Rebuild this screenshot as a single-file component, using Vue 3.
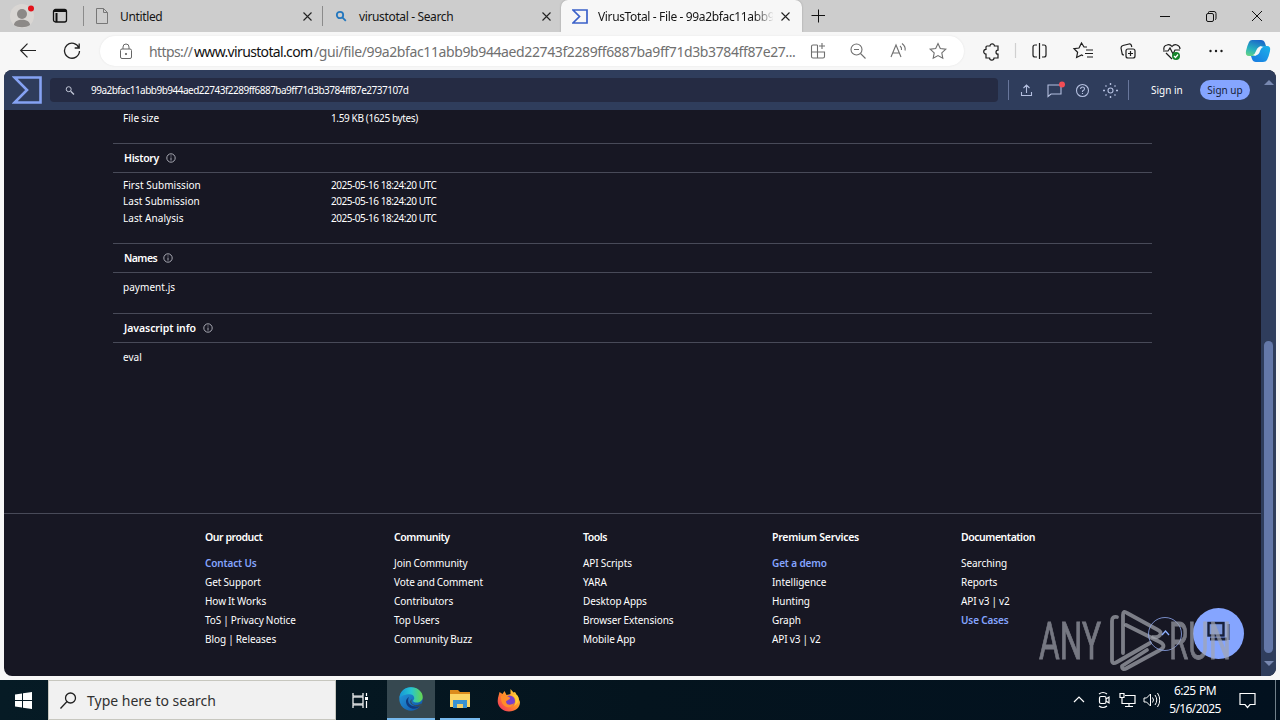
<template>
  <div class="desktop">
    <div class="tab-strip">
      <div class="profile">
        <svg width="28" height="30" viewBox="0 0 28 30">
          <circle cx="14" cy="15" r="12" fill="#d9d6d3" />
          <circle cx="14" cy="13" r="5" fill="#8c8987" />
          <path d="M6 24c0-7 16-7 16 0-4 3-12 3-16 0z" fill="#8c8987" />
          <circle cx="23" cy="7.500" r="3" fill="#e3121b" />
        </svg>
      </div>
      <svg class="workspaces" width="16" height="16" viewBox="0 0 16 16" fill="none" stroke="#111">
        <rect x="1.500" y="1.500" width="13" height="12.500" rx="2" stroke-width="1.300" />
        <path d="M2 3h12M4.500 5v9" stroke-width="2" />
      </svg>

      <div class="tab first">
        <svg width="14" height="16" viewBox="0 0 14 16" fill="none" stroke="#777">
          <path d="M1.500.5h7l4 4v11h-11zM8.500.5v4h4" />
        </svg>
        <span class="tab-title untitled">Untitled</span>
        <svg class="close" width="9" height="9" viewBox="0 0 9 9"><path d="M.5.5l8 8M8.500.5l-8 8" /></svg>
      </div>
      <div class="tab second">
        <svg width="14" height="14" viewBox="0 0 14 14" fill="none" stroke="#2477be" stroke-width="1.800">
          <circle cx="6" cy="6" r="3.200" />
          <path d="M8.300 8.300l3.500 3.500" />
        </svg>
        <span class="tab-title search-tab">virustotal - Search</span>
        <svg class="close" width="9" height="9" viewBox="0 0 9 9"><path d="M.5.5l8 8M8.500.5l-8 8" /></svg>
      </div>
      <div class="tab active">
        <svg width="16" height="15" viewBox="0 0 16 15" fill="none" stroke="#3b61c9" stroke-width="1.700">
          <path d="M1 1h14v13H1l6.500-6.500z" />
        </svg>
        <span class="tab-title fade">VirusTotal - File - 99a2bfac11abb9</span>
        <svg class="close" width="9" height="9" viewBox="0 0 9 9"><path d="M.5.5l8 8M8.500.5l-8 8" /></svg>
      </div>
      <svg class="new-tab" width="14" height="14" viewBox="0 0 14 14" stroke="#111"><path d="M7.500 .5v13M.5 6.500h14" /></svg>

      <svg class="window-controls" width="102" height="14" viewBox="0 0 102 14" fill="none" stroke="#111">
        <path d="M0 7.500h10" />
        <rect x="46.500" y="4.500" width="7" height="8" rx="1.500" />
        <path d="M48.500 4V3.500q0-1 1-1h4.500q2 0 2 2v5q0 1-1 1" />
        <path d="M92 2l10 10M102 2L92 12" />
      </svg>
    </div>

    <div class="toolbar">
      <svg class="back" width="18" height="16" viewBox="0 0 18 16" fill="none" stroke="#222" stroke-width="1.200">
        <path d="M17 7.500H2M8.500 .7L1.700 7.500l6.800 6.800" />
      </svg>
      <svg class="reload" width="18" height="18" viewBox="0 0 18 18" fill="none" stroke="#222" stroke-width="1.300">
        <path d="M16 6A7.500 7.500 0 1 0 16.500 9M16.200 1.500V6h-4.500" />
      </svg>
      <div class="address">
        <svg class="lock" width="14" height="17" viewBox="0 0 14 17" fill="none" stroke="#666">
          <rect x="1.500" y="6" width="11" height="9.500" rx="1.500" />
          <path d="M4 6V4a3 3 0 0 1 6 0v2" />
          <circle cx="7" cy="11" r=".7" fill="#666" />
        </svg>
        <span class="url url-scheme">https://</span>
        <span class="url url-host">www.virustotal.com</span>
        <span class="url url-path">/gui/file/99a2bfac11abb9b944aed22743f2289ff6887ba9ff71d3b3784ff87e27...</span>
        <svg class="address-icons" width="138" height="18" viewBox="0 0 138 18" fill="none" stroke="#6f6f6f" stroke-width="1.100">
          <path d="M8.500 3H4Q2.500 3 2.500 4.500v10Q2.500 16 4 16h10q1.500 0 1.500-1.500V10H2.500M8.500 3v13M13 1v6M10 4h6" />
          <circle cx="47.500" cy="7.500" r="5.500" />
          <path d="M45 7.500h5M51.500 11.500l5 5" />
          <path d="M82 15l5-12 5 12M84 11h6.500M91 4q2 1.500 1.500 4M93 1.500q4 3 3 7" />
          <path d="M129 1.500l2.300 5 5.500.7-4 3.700 1 5.300-4.800-2.600-4.800 2.600 1-5.300-4-3.700 5.500-.7z" />
        </svg>
      </div>
      <svg class="browser-icons" width="296" height="28" viewBox="0 0 296 28" fill="none" stroke="#1c1c1c" stroke-width="1.200">
        <path transform="translate(1 0)" d="M7 9h3a2.200 2.200 0 1 1 4.400 0H18v4.200a2 2 0 1 0 0 4V21h-4a2.200 2.200 0 0 1-4.400 0H6v-4a2.300 2.300 0 1 1 0-4.600V10q0-1 1-1z" />
        <path d="M36.500 6v15" stroke="#d0d0d0" />
        <path transform="translate(1 0)" d="M57 8h-2q-2 0-2 2v8q0 2 2 2h2M62 8h2q2 0 2 2v8q0 2-2 2h-2M59.500 6v16" />
        <path transform="translate(1 0)" d="M107 10h-3l-2.500-4-2.500 5-5 .7 3.600 3.600-1 5.200 5-2.500 1.500.8M106 13h7M105 16.500h8M107 20h6" />
        <g transform="translate(3 0)">
          <rect x="144" y="12" width="9" height="9" rx="2" />
          <path d="M148.500 14v5M146 16.500h5M142 18q-2 0-2-2l-1-5q0-2 2-2.500l6-1.500q2-.5 2.500 2l.3 1" />
        </g>
        <g transform="translate(3 0)">
          <path d="M182 13q-1-4 3-5 3-1 5 1.500 2-2.500 5-1.500 3 1 3 4M181 14h5l2-3 3 6 2-4h5M184 16l6 6" />
          <circle cx="194" cy="19" r="4" fill="#15832b" stroke="none" />
          <path d="M192 19l1.500 1.500 2.500-3" stroke="#fff" />
        </g>
        <g fill="#1c1c1c" stroke="none"><circle cx="231.500" cy="14" r="1.200" /><circle cx="237" cy="14" r="1.200" /><circle cx="242.500" cy="14" r="1.200" /></g>
        <g stroke="none">
          <path d="M273 3h9q3 0 4 3l1 3h-5q-2 0-3 3l-2 5q-1 2-4 2h-3q-4 0-3-5 1-5 3-9 1-2 3-2z" fill="url(#copilotLeft)" />
          <path d="M285 9h3q4 0 3 5-1 5-3 9-1 2-4 2h-7q-3 0-4-3l-1-3h4q2 0 3-3l2-5q1-2 4-2z" fill="url(#copilotRight)" />
          <path d="M280 10h4q-2 1-3 4-1 4-4 4h-3q2-1 3-4 1-3 3-4z" fill="#f7f7f7" />
        </g>
        <defs>
          <linearGradient id="copilotLeft" x1=".6" y1="0" x2=".2" y2="1"><stop stop-color="#1b68c9" /><stop offset=".6" stop-color="#27b2bf" /><stop offset="1" stop-color="#64d286" /></linearGradient>
          <linearGradient id="copilotRight" x1="1" y1="0" x2="0" y2="1"><stop stop-color="#1cb3ea" /><stop offset="1" stop-color="#1877e0" /></linearGradient>
        </defs>
      </svg>
    </div>

    <div class="page">
      <header class="vt-header">
        <svg class="vt-logo" width="30" height="28" viewBox="0 0 30 28" fill="none" stroke="#85a2f3" stroke-width="2.600">
          <path d="M2.500 1.500h26v25h-26L15 14z" />
        </svg>
        <div class="vt-search">
          <svg width="10" height="10" viewBox="0 0 10 10" fill="none" stroke="#c3c8d8"><circle cx="3.700" cy="4.200" r="2.500" /><path d="M5.700 6.200L9 9.500" stroke-width="1.300" /></svg>
          <span class="hash">99a2bfac11abb9b944aed22743f2289ff6887ba9ff71d3b3784ff87e2737107d</span>
        </div>
        <i class="divider"></i>
        <svg class="vt-icons" width="100" height="18" viewBox="0 0 100 18" fill="none" stroke="#b4bfdf" stroke-width="1.100">
          <path d="M6.500 12V4M3.500 7l3-3 3 3M1.500 11v3.500h10V11" />
          <path d="M28 4h13v9H31l-3 2.500z" />
          <circle cx="42" cy="3.500" r="3" fill="#f24d55" stroke="none" />
          <circle cx="62.500" cy="9.500" r="6" />
          <path d="M60.500 8q.2-2 2-2 2 0 2 1.700 0 1.300-2 2.300v1M62.500 12v1" />
          <circle cx="90.500" cy="9.500" r="2.500" />
          <path d="M90.500 2v2M90.500 15v2M83 9.500h2M96 9.500h2M85.500 4.500l1 1M94.500 13.500l1 1M85.500 14.500l1-1M94.500 5.500l1-1" stroke-width="1.400" />
        </svg>
        <i class="divider second"></i>
        <span class="sign-in">Sign in</span>
        <span class="sign-up">Sign up</span>
      </header>

      <div class="page-body">
        <main class="content">
          <div class="details">
            <div class="detail size-row"><span>File size</span><span class="value">1.59 KB (1625 bytes)</span></div>
            <section v-for="section in sections" :key="section.title" :class="section.kind">
              <h2>
                <span>{{ section.title }}</span>
                <svg width="10" height="10" viewBox="0 0 10 10" fill="none" stroke="#b7b8c2" stroke-width=".9">
                  <circle cx="5" cy="5" r="4.200" /><path d="M5 4.500v3M5 2.500v1" />
                </svg>
              </h2>
              <div class="rows">
                <div v-for="row in section.rows" :key="row[0]" class="detail">
                  <span>{{ row[0] }}</span><span v-if="row[1]" class="value date">{{ row[1] }}</span>
                </div>
              </div>
            </section>
          </div>

          <footer>
            <div v-for="column in footerColumns" :key="column.title" class="footer-column">
              <h3>{{ column.title }}</h3>
              <a v-for="link in column.links" :key="link" :class="{ highlight: highlighted.includes(link) }">{{ link }}</a>
            </div>
          </footer>
        </main>
        <div class="scrollbar"><div class="thumb"></div></div>
      </div>
      <svg class="scroll-arrow up" width="10" height="6" viewBox="0 0 10 6"><path d="M0 6l5-5 5 5z" /></svg>
      <svg class="scroll-arrow down" width="10" height="6" viewBox="0 0 10 6"><path d="M0 0l5 5 5-5z" /></svg>
    </div>

    <!-- floating buttons and the recorder's mark lie over the page -->
    <svg class="overlay" width="244" height="72" viewBox="0 0 244 72">
      <circle cx="184.500" cy="28.500" r="25.500" fill="#85a5ff" />
      <g fill="none" stroke="#182039">
        <rect x="174.500" y="18" width="15" height="12.500" fill="#7995dc" stroke-width="2.400" />
        <path d="M176 34h17" stroke-width="3" />
        <path d="M194.500 19v16" stroke="#4d5c89" stroke-width="2.500" />
      </g>
      <g fill="none" stroke="#a3a6af" stroke-opacity=".72" stroke-width="3.800" stroke-linejoin="round" stroke-linecap="round">
        <path d="M83 12q-5-1-5 4v39q0 5 5 2l33-19" />
        <path d="M89 48V10q0-5 4-2l31 17q4 2 2 5t-7 2" />
        <path d="M92 20l34 17q7 4 0 8L93 63q-5 3-5-2l25-16" />
      </g>
      <circle cx="131" cy="29" r="16.500" fill="none" stroke="#8ea7ee" stroke-width=".8" />
      <path d="M128 30l3.500-4 3.500 4" fill="none" stroke="#8eb0ff" stroke-width="1.300" />
      <g class="mark-text">
        <text x="5" y="54" textLength="62" lengthAdjust="spacingAndGlyphs">ANY</text>
        <text x="135" y="54" textLength="62" lengthAdjust="spacingAndGlyphs">RUN</text>
      </g>
    </svg>

    <div class="taskbar">
      <div class="start">
        <svg width="17" height="17" viewBox="0 0 17 17" fill="#fff"><path d="M0 2.500l7-1V8H0zM8 1.300L17 0v8H8zM0 9h7v6.500l-7-1zM8 9h9v8l-9-1.300z" /></svg>
      </div>
      <div class="task-search">
        <svg width="17" height="17" viewBox="0 0 17 17" fill="none" stroke="#202020" stroke-width="1.300"><circle cx="10.500" cy="6" r="5" /><path d="M7 9.500l-6.500 7" /></svg>
        <span>Type here to search</span>
      </div>
      <div class="task-view">
        <svg width="17" height="17" viewBox="0 0 17 17" fill="none" stroke="#fff" stroke-width="1.200"><path d="M1 1v3h10V1M1 16v-3h10v3M14.500 1v3M14.500 9v7" /><rect x="1" y="5" width="10" height="7" /><path d="M13 6.500h3" stroke-width="3" /></svg>
      </div>
      <div class="task-app edge">
        <svg width="24" height="24" viewBox="0 0 24 24">
          <defs>
            <linearGradient id="edgeTop" x1="0" y1="0" x2="1" y2="0"><stop stop-color="#1696d7" /><stop offset=".5" stop-color="#27c5d0" /><stop offset="1" stop-color="#67d64c" /></linearGradient>
            <linearGradient id="edgeBase" x1="0" y1="0" x2="1" y2="1"><stop stop-color="#249fe0" /><stop offset="1" stop-color="#1150a6" /></linearGradient>
          </defs>
          <circle cx="12" cy="12" r="11.700" fill="url(#edgeBase)" />
          <path d="M.5 11C1 4 6 .3 12 .3c7 0 12 5 11.700 10 0 4-4 6-8 5-2-.5-2-2-.7-3 1-2-1-5-4-5C6 7.300 2 9 .5 11z" fill="url(#edgeTop)" />
          <path d="M10 10c-3 6 2 11 11 9-4 5-13 3-14-4-.3-2 1-4 3-5z" fill="#103b80" />
          <path d="M13.500 12c-3 3 0 7 5 6l4-1.500 1.500 2-4 1c-7 0-12-5-6.500-7.500z" fill="#394c54" />
        </svg>
      </div>
      <div class="task-app explorer">
        <svg width="22" height="20" viewBox="0 0 22 20"><path d="M1 1h8l2 2h10v6H1z" fill="#dc8c1d" /><path d="M1 5h20v13H1z" fill="#fcd565" /><path d="M4 11h14v8h-4v-4H8v4H4z" fill="#3992d1" /><path d="M8 15h6v4H8z" fill="#efce6b" /></svg>
      </div>
      <div class="task-app firefox">
        <svg width="24" height="24" viewBox="0 0 24 24">
          <defs><linearGradient id="foxFire" x1="1" y1="0" x2="0" y2="1"><stop stop-color="#ffe940" /><stop offset=".5" stop-color="#ff8929" /><stop offset="1" stop-color="#f02668" /></linearGradient></defs>
          <path d="M2.500 4l3 2 2-3 2 4 4-1V1l3 3.500L18 4l3 5 2 5c0 6-5 9.500-11 9.500S.5 19 .7 13C.8 9 2 7 2.500 4z" fill="url(#foxFire)" />
          <circle cx="12.500" cy="13" r="5.500" fill="#7840cb" />
          <path d="M4 8c4-2 7 0 9 2 0 2-4 2-4 4 1 4 6 3 8 1-1 7-14 6-13-7z" fill="#ff8c2a" />
          <path d="M15 7c4 2 5 7 2 11 5-3 6-8 3-11z" fill="#ffca36" />
        </svg>
      </div>
      <svg class="tray-icons" width="87" height="18" viewBox="0 0 87 18" fill="none" stroke="#fff" stroke-width="1.200">
        <path d="M1 11l5-5 5 5" />
        <rect x="26.500" y="5.500" width="6.500" height="7" rx="1.500" /><path d="M33 8l3-2v6l-3-2M26 3q4-3 8 0M26 15q4 3 8 0" />
        <path d="M52 4.500h10v8H51M56 12.500v3M52 15.500h8M47 2.500h4v4h-4zM49 6.500v6h3" />
        <path d="M71 7h2.500l4-4v12l-4-4H71zM79.500 6.500q2 2.500 0 5M82 4q3.500 5 0 10M84.500 2q4.500 7 0 14" stroke-width="1" />
      </svg>
      <div class="clock"><span class="time">6:25 PM</span><span>5/16/2025</span></div>
      <svg class="notice" width="17" height="17" viewBox="0 0 17 17" fill="none" stroke="#fff" stroke-width="1.200"><path d="M1 1.500h15v11h-5l-2.500 3-2.500-3H1z" /></svg>
      <i class="show-desktop"></i>
    </div>
  </div>
</template>

<script setup>
const submitted = '2025-05-16 18:24:20 UTC'

const sections = [
  {
    title: 'History',
    kind: 'history',
    rows: [
      ['First Submission', submitted],
      ['Last Submission', submitted],
      ['Last Analysis', submitted]
    ]
  },
  { title: 'Names', kind: 'names', rows: [['payment.js']] },
  { title: 'Javascript info', kind: 'script-info', rows: [['eval']] }
]

const highlighted = ['Contact Us', 'Get a demo', 'Use Cases']

const footerColumns = [
  { title: 'Our product', links: ['Contact Us', 'Get Support', 'How It Works', 'ToS | Privacy Notice', 'Blog | Releases'] },
  { title: 'Community', links: ['Join Community', 'Vote and Comment', 'Contributors', 'Top Users', 'Community Buzz'] },
  { title: 'Tools', links: ['API Scripts', 'YARA', 'Desktop Apps', 'Browser Extensions', 'Mobile App'] },
  { title: 'Premium Services', links: ['Get a demo', 'Intelligence', 'Hunting', 'Graph', 'API v3 | v2'] },
  { title: 'Documentation', links: ['Searching', 'Reports', 'API v3 | v2', 'Use Cases'] }
]
</script>

<style>
body {
  margin: 0;
  overflow: hidden;
}
</style>

<style scoped>
* {
  box-sizing: border-box;
}

.desktop {
  position: relative;
  width: 1280px;
  height: 720px;
  display: flex;
  flex-direction: column;
  background: #f7f7f7;
  font-family: "Noto Sans", sans-serif;
  white-space: nowrap;
}

svg {
  display: block;
  flex-shrink: 0;
}

.tab-strip {
  height: 32px;
  display: flex;
  align-items: center;
  background: #cdcdcd;
}

.profile {
  margin-left: 8px;
}

.workspaces {
  margin: 0 15px 0 16px;
}

.tab {
  height: 32px;
  display: flex;
  align-items: center;
  font-size: 12px;
  color: #151515;
}

.tab.first,
.tab.second {
  width: 239px;
  padding: 0 10px 0 12px;
  background: linear-gradient(#8b8b8b, #8b8b8b) 0 6px / 1px 20px no-repeat;
}

.tab.active {
  width: 241px;
  padding: 0 12px 0 11px;
  background: #f7f7f7;
  border-radius: 7px 7px 0 0;
  box-shadow: 0 0 2px #999;
  clip-path: inset(0 -3px 0 -3px);
}

.tab-title {
  margin-left: 10px;
}

.untitled {
  margin-left: 11px;
  letter-spacing: -0.35px;
}

.search-tab {
  margin-left: 11px;
  letter-spacing: -0.36px;
}

.fade {
  width: 175px;
  letter-spacing: -0.36px;
  mask-image: linear-gradient(to right, #000 156px, transparent 176px);
}

.close {
  margin-left: auto;
  fill: none;
  stroke: #222;
  stroke-width: 1.1;
}

.new-tab {
  margin-left: 9px;
}

.window-controls {
  margin-left: auto;
  margin-right: 18px;
}

.toolbar {
  height: 38px;
  display: flex;
  align-items: center;
}

.back {
  margin-left: 19px;
}

.reload {
  margin-left: 26px;
}

.address {
  width: 864px;
  height: 30px;
  margin-left: 19px;
  padding-left: 19px;
  display: flex;
  align-items: center;
  border-radius: 15px;
  background: #fff;
  box-shadow: 0 0 2px #e2e2e2;
}

.url {
  font-size: 14px;
  color: #707070;
}

.url-scheme {
  width: 45px;
  margin-left: 16px;
  letter-spacing: -0.6px;
}

.url-host {
  width: 120px;
  color: #111;
  letter-spacing: -0.65px;
}

.url-path {
  width: 495px;
  letter-spacing: -0.39px;
}

.browser-icons {
  margin-left: 15px;
}

.page {
  position: relative;
  width: 1272px;
  height: 606px;
  margin-left: 4px;
  overflow: hidden;
  border-radius: 8px;
  background: #171723;
  color: #fff;
}

.vt-header {
  height: 40px;
  display: flex;
  align-items: center;
  background: #2f3d5c;
  font-size: 10px;
}

.vt-logo {
  margin-left: 8px;
}

.vt-search {
  width: 948px;
  height: 24px;
  margin-left: 8px;
  padding-left: 15px;
  display: flex;
  align-items: center;
  border-radius: 4px;
  background: #252b43;
}

.hash {
  margin-left: 16px;
  letter-spacing: -0.51px;
}

.divider {
  width: 1px;
  height: 20px;
  margin-left: 10px;
  background: #68779c;
}

.vt-icons {
  margin-left: 11px;
}

.divider.second {
  margin-left: 8px;
}

.sign-in {
  margin-left: 22px;
  width: 33px;
}

.sign-up {
  width: 50px;
  height: 20px;
  margin-left: 16px;
  line-height: 20px;
  text-align: center;
  border-radius: 10px;
  background: #85a5ff;
  color: #151c36;
}

.page-body {
  height: 566px;
  display: flex;
}

.content {
  width: 1257px;
  display: flex;
  flex-direction: column;
}

.details {
  width: 1039px;
  height: 403px;
  margin-left: 109px;
}

.detail {
  height: 16.5px;
  display: flex;
  align-items: center;
  padding-left: 10px;
  font-size: 10px;
  letter-spacing: 0.05px;
}

.detail > span:first-child {
  width: 208px;
}

.size-row {
  margin-bottom: 16.5px;
}

.size-row > span:first-child {
  word-spacing: -0.5px;
}

.detail .value {
  letter-spacing: -0.37px;
}

.detail .date {
  letter-spacing: -0.47px;
}

section {
  height: 70px;
  border-top: 1px solid #484a58;
}

section.history {
  height: 100px;
}

section h2 {
  height: 29px;
  margin: 0;
  padding-left: 11px;
  display: flex;
  align-items: center;
  gap: 7px;
  border-bottom: 1px solid #484a58;
  font-size: 10.5px;
  font-weight: 600;
  letter-spacing: -0.3px;
}

.names h2 {
  gap: 6px;
  letter-spacing: -0.55px;
}

.script-info h2 {
  letter-spacing: -0.06px;
}

.rows {
  padding-top: 6px;
}

.history .rows {
  padding-top: 3.5px;
}

footer {
  height: 163px;
  display: flex;
  padding: 15px 0 0 201px;
  border-top: 1px solid #484a58;
}

.footer-column {
  width: 189px;
  font-size: 10px;
}

.footer-column h3 {
  height: 16px;
  margin: 0 0 9px;
  line-height: 16px;
  font-size: 10.5px;
  font-weight: 600;
  letter-spacing: -0.46px;
}

.footer-column:nth-child(4) h3 {
  letter-spacing: -0.27px;
}

.footer-column a {
  display: block;
  height: 19px;
  line-height: 19px;
  letter-spacing: -0.05px;
  word-spacing: -0.5px;
}

.footer-column .highlight {
  color: #85a5ff;
  font-weight: 600;
  letter-spacing: -0.13px;
  word-spacing: 0;
}

.scrollbar {
  width: 15px;
  padding: 231px 3px 0;
  background: #2f3d5c;
}

.thumb {
  height: 312px;
  border-radius: 5px;
  background: #6478a9;
}

.scroll-arrow {
  position: absolute;
  right: 2px;
  fill: #7888b0;
}

.scroll-arrow.up {
  top: 9px;
}

.scroll-arrow.down {
  bottom: 9px;
}

.overlay {
  position: absolute;
  left: 1034px;
  top: 605px;
}

.mark-text {
  fill: #a3a6af;
  stroke: #a3a6af;
  stroke-width: 0.9px;
  opacity: 0.68;
  font-family: Roboto, sans-serif;
  font-size: 51px;
}

.taskbar {
  height: 40px;
  margin-top: auto;
  display: flex;
  align-items: center;
  background: linear-gradient(90deg, #061b25, #04141e 50%, #02111f);
  color: #fff;
}

.start {
  width: 48px;
  padding-left: 15px;
}

.task-search {
  width: 288px;
  height: 40px;
  padding-left: 11px;
  display: flex;
  align-items: center;
  background: #f1f1f1;
  border: 1px solid #c7c7bf;
  color: #303030;
  font-size: 14px;
}

.task-search span {
  margin-left: 10px;
}

.task-view {
  width: 51px;
  padding-left: 16px;
}

.task-app {
  height: 40px;
  display: flex;
  align-items: center;
  justify-content: center;
}

.edge {
  width: 48px;
  background: #364850;
  border-bottom: 2px solid #76b9ed;
}

.explorer {
  width: 40px;
  margin-left: 5px;
  border-bottom: 2px solid #76b9ed;
}

.firefox {
  width: 48px;
  margin-left: 5px;
}

.tray-icons {
  margin-left: auto;
}

.clock {
  width: 64px;
  margin-left: 3px;
  display: flex;
  flex-direction: column;
  align-items: center;
  font-size: 12px;
  line-height: 18px;
  letter-spacing: -0.6px;
}

.time {
  word-spacing: 1px;
}

.notice {
  margin-left: 12px;
}

.show-desktop {
  width: 1px;
  height: 40px;
  margin: 0 4px 0 19px;
  background: #71808a;
}
</style>
